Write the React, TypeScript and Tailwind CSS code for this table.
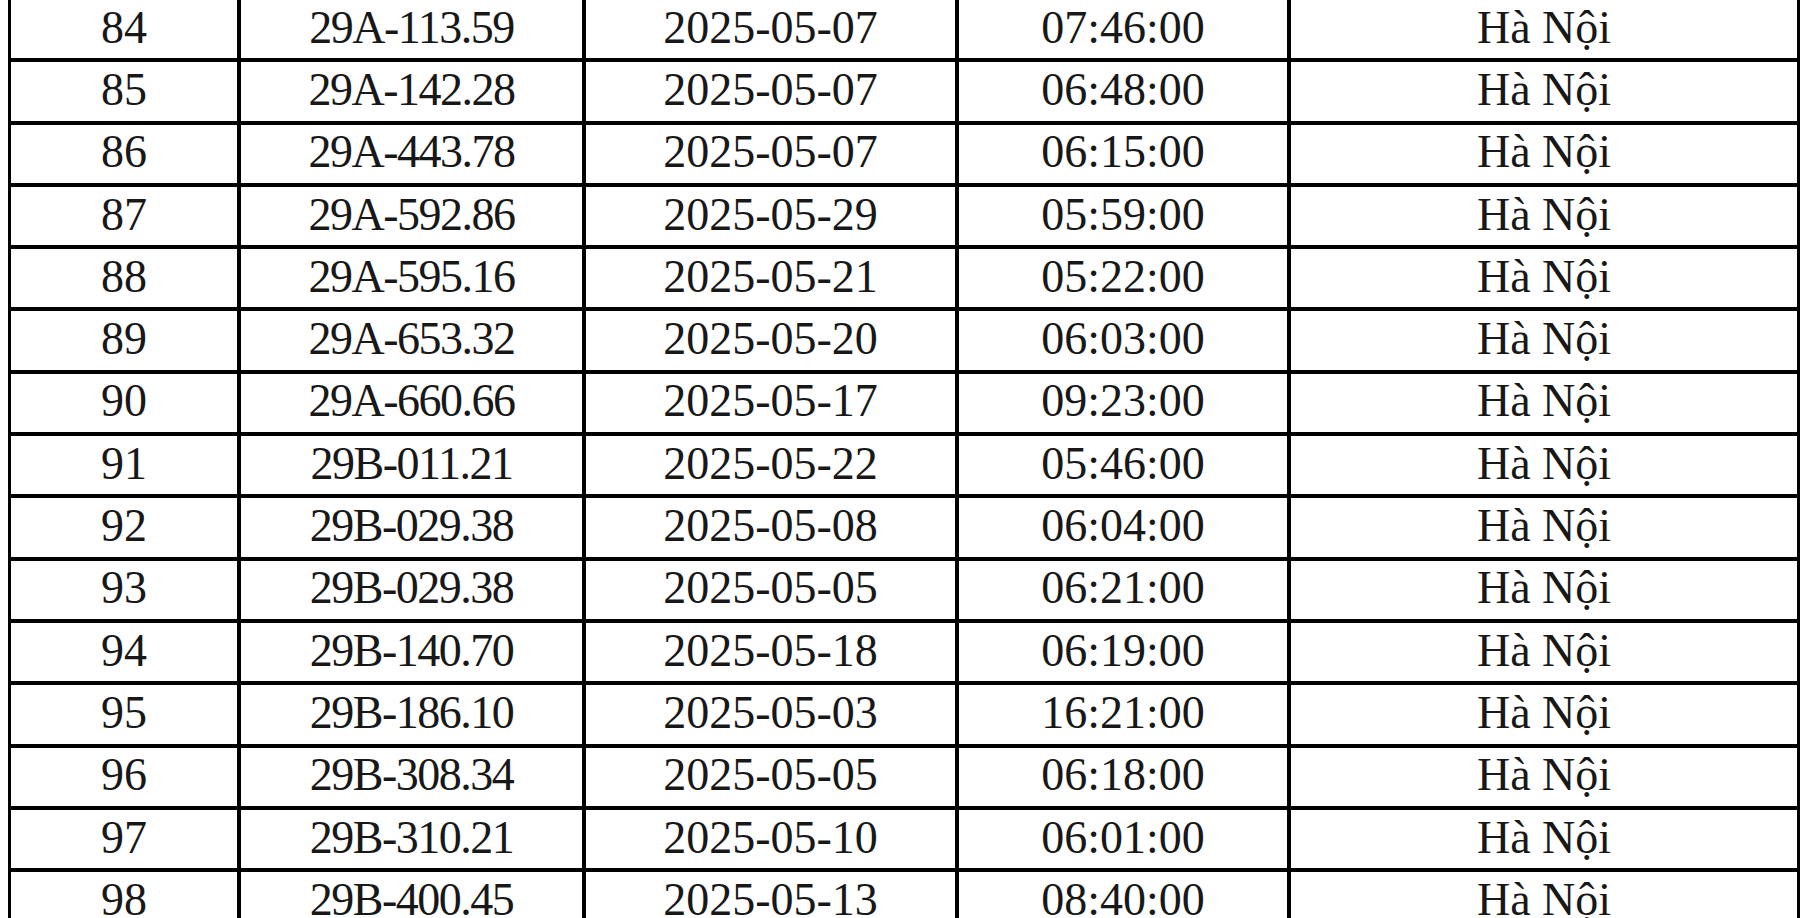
import React from 'react';

type Row = [string, string, string, string, string];

const rows: Row[] = [
  ['84', '29A-113.59', '2025-05-07', '07:46:00', 'Hà Nội'],
  ['85', '29A-142.28', '2025-05-07', '06:48:00', 'Hà Nội'],
  ['86', '29A-443.78', '2025-05-07', '06:15:00', 'Hà Nội'],
  ['87', '29A-592.86', '2025-05-29', '05:59:00', 'Hà Nội'],
  ['88', '29A-595.16', '2025-05-21', '05:22:00', 'Hà Nội'],
  ['89', '29A-653.32', '2025-05-20', '06:03:00', 'Hà Nội'],
  ['90', '29A-660.66', '2025-05-17', '09:23:00', 'Hà Nội'],
  ['91', '29B-011.21', '2025-05-22', '05:46:00', 'Hà Nội'],
  ['92', '29B-029.38', '2025-05-08', '06:04:00', 'Hà Nội'],
  ['93', '29B-029.38', '2025-05-05', '06:21:00', 'Hà Nội'],
  ['94', '29B-140.70', '2025-05-18', '06:19:00', 'Hà Nội'],
  ['95', '29B-186.10', '2025-05-03', '16:21:00', 'Hà Nội'],
  ['96', '29B-308.34', '2025-05-05', '06:18:00', 'Hà Nội'],
  ['97', '29B-310.21', '2025-05-10', '06:01:00', 'Hà Nội'],
  ['98', '29B-400.45', '2025-05-13', '08:40:00', 'Hà Nội'],
];

const cell = 'flex items-center justify-center pb-[3px]';

const App: React.FC = () => {
  return (
    <div className="h-[918px] w-[1811px] overflow-hidden bg-white">
      <div
        className="ml-[8px] -mt-[4px] w-[1792px] border-x-[3px] border-black text-[46px] leading-none text-[#181818]"
        style={{ fontFamily: '"Liberation Serif", "Times New Roman", serif' }}
      >
        {rows.map((r) => (
          <div
            key={r[0]}
            className="grid h-[62.3px] grid-cols-[226px_345px_373px_332px_510px] border-t-4 border-black"
          >
            <div className={cell}>{r[0]}</div>
            <div className={`${cell} border-l-4 border-black tracking-[-1.5px]`}>{r[1]}</div>
            <div className={`${cell} border-l-4 border-black`}>{r[2]}</div>
            <div className={`${cell} border-l-4 border-black`}>{r[3]}</div>
            <div className={`${cell} border-l-4 border-black`}>{r[4]}</div>
          </div>
        ))}
      </div>
    </div>
  );
};

export default App;
